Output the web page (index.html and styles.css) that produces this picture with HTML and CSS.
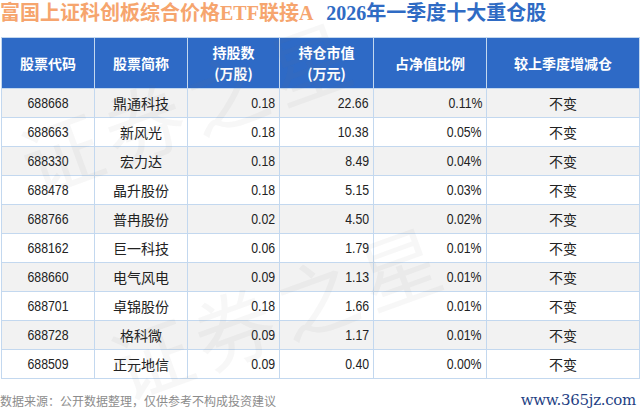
FILE: index.html
```html
<!DOCTYPE html>
<html lang="zh-CN">
<head>
<meta charset="utf-8">
<title>富国上证科创板综合价格ETF联接A 2026年一季度十大重仓股</title>
<link rel="stylesheet" href="styles.css">
</head>
<body>
<div class="page">
  <h1 class="title"><span class="t-fund">富国上证科创板综合价格ETF联接A</span><span class="t-sub">2026年一季度十大重仓股</span></h1>
  <table class="holdings">
    <colgroup>
      <col class="c1"><col class="c2"><col class="c3"><col class="c4"><col class="c5"><col class="c6">
    </colgroup>
    <thead>
      <tr>
        <th>股票代码</th>
        <th>股票简称</th>
        <th>持股数<br>(万股)</th>
        <th>持仓市值<br>(万元)</th>
        <th>占净值比例</th>
        <th>较上季度增减仓</th>
      </tr>
    </thead>
    <tbody>
      <tr><td class="code"><span class="n">688668</span></td><td class="name">鼎通科技</td><td class="num"><span class="n">0.18</span></td><td class="num"><span class="n">22.66</span></td><td class="num"><span class="n">0.11%</span></td><td class="chg">不变</td></tr>
      <tr><td class="code"><span class="n">688663</span></td><td class="name">新风光</td><td class="num"><span class="n">0.18</span></td><td class="num"><span class="n">10.38</span></td><td class="num"><span class="n">0.05%</span></td><td class="chg">不变</td></tr>
      <tr><td class="code"><span class="n">688330</span></td><td class="name">宏力达</td><td class="num"><span class="n">0.18</span></td><td class="num"><span class="n">8.49</span></td><td class="num"><span class="n">0.04%</span></td><td class="chg">不变</td></tr>
      <tr><td class="code"><span class="n">688478</span></td><td class="name">晶升股份</td><td class="num"><span class="n">0.18</span></td><td class="num"><span class="n">5.15</span></td><td class="num"><span class="n">0.03%</span></td><td class="chg">不变</td></tr>
      <tr><td class="code"><span class="n">688766</span></td><td class="name">普冉股份</td><td class="num"><span class="n">0.02</span></td><td class="num"><span class="n">4.50</span></td><td class="num"><span class="n">0.02%</span></td><td class="chg">不变</td></tr>
      <tr><td class="code"><span class="n">688162</span></td><td class="name">巨一科技</td><td class="num"><span class="n">0.06</span></td><td class="num"><span class="n">1.79</span></td><td class="num"><span class="n">0.01%</span></td><td class="chg">不变</td></tr>
      <tr><td class="code"><span class="n">688660</span></td><td class="name">电气风电</td><td class="num"><span class="n">0.09</span></td><td class="num"><span class="n">1.13</span></td><td class="num"><span class="n">0.01%</span></td><td class="chg">不变</td></tr>
      <tr><td class="code"><span class="n">688701</span></td><td class="name">卓锦股份</td><td class="num"><span class="n">0.18</span></td><td class="num"><span class="n">1.66</span></td><td class="num"><span class="n">0.01%</span></td><td class="chg">不变</td></tr>
      <tr><td class="code"><span class="n">688728</span></td><td class="name">格科微</td><td class="num"><span class="n">0.09</span></td><td class="num"><span class="n">1.17</span></td><td class="num"><span class="n">0.01%</span></td><td class="chg">不变</td></tr>
      <tr><td class="code"><span class="n">688509</span></td><td class="name">正元地信</td><td class="num"><span class="n">0.09</span></td><td class="num"><span class="n">0.40</span></td><td class="num"><span class="n">0.00%</span></td><td class="chg">不变</td></tr>
    </tbody>
  </table>
  <div class="footer">
    <span class="source">数据来源：公开数据整理，仅供参考不构成投资建议</span>
    <span class="logo">www.365jz.com</span>
  </div>
  <div class="watermarks" aria-hidden="true">
    <span class="wm wm-a">证券之星</span>
    <span class="wm wm-b">证券之星</span>
  </div>
</div>
</body>
</html>
```

FILE: styles.css
```css
html, body {
  margin: 0;
  padding: 0;
  background: #ffffff;
}

.page {
  width: 640px;
  height: 410px;
  overflow: hidden;
  position: relative;
  font-family: "Noto Sans CJK SC", "Liberation Sans", sans-serif;
}

.title {
  margin: 0 0 11px 0;
  height: 26px;
  line-height: 26px;
  font-size: 20px;
  font-weight: bold;
  font-family: "Liberation Serif", "Noto Sans CJK SC", serif;
  white-space: nowrap;
}

.t-fund {
  color: #f6a56e;
}

.t-sub {
  color: #2f6bc4;
  margin-left: 13px;
}

.holdings {
  margin-left: 1px;
  width: 638px;
  border-collapse: collapse;
  table-layout: fixed;
  font-size: 14px;
  color: #222;
}

.c1 { width: 93px; }
.c2 { width: 93px; }
.c3 { width: 92px; }
.c4 { width: 94px; }
.c5 { width: 113px; }
.c6 { width: 153px; }

.holdings th {
  background: #2e6ac6;
  color: #ffffff;
  font-weight: bold;
  font-size: 14px;
  line-height: 21px;
  height: 50px;
  padding: 0;
  text-align: center;
  border: 1px solid #c3d8ef;
}

.holdings td {
  height: 28px;
  padding: 0 4px;
  border: 1px solid #c3d8ef;
  line-height: 28px;
  white-space: nowrap;
}

.holdings tbody tr:nth-child(odd) td {
  background: #f2f2f2;
}

.holdings tbody tr:nth-child(even) td {
  background: #ffffff;
}

.code,
.num {
  font-family: "Liberation Sans", sans-serif;
  font-size: 15px;
}

.n {
  display: inline-block;
  transform: scaleX(0.82);
}

.code {
  text-align: center;
}

.num {
  text-align: right;
}

.num .n {
  transform-origin: right center;
}

.code .n {
  transform-origin: center center;
}

.name, .chg {
  text-align: center;
}

.footer {
  display: flex;
  justify-content: space-between;
  align-items: center;
  margin-top: 10px;
  height: 22px;
}

.source {
  font-size: 12px;
  color: #8c8c8c;
}

.logo {
  font-family: "DejaVu Serif", "Liberation Serif", serif;
  font-size: 15px;
  color: #1f3f84;
  margin-right: 4px;
  letter-spacing: -0.3px;
}

.watermarks {
  position: absolute;
  inset: 0;
  pointer-events: none;
}

.wm {
  position: absolute;
  font-family: "Noto Sans CJK SC", sans-serif;
  font-size: 80px;
  line-height: 80px;
  letter-spacing: 8px;
  white-space: nowrap;
  color: rgba(120, 120, 120, 0.06);
  transform-origin: 40px 40px;
  transform: rotate(-20deg);
}

.wm-a { left: 20px;  top: 110px; }
.wm-b { left: 110px; top: 315px; }
```
